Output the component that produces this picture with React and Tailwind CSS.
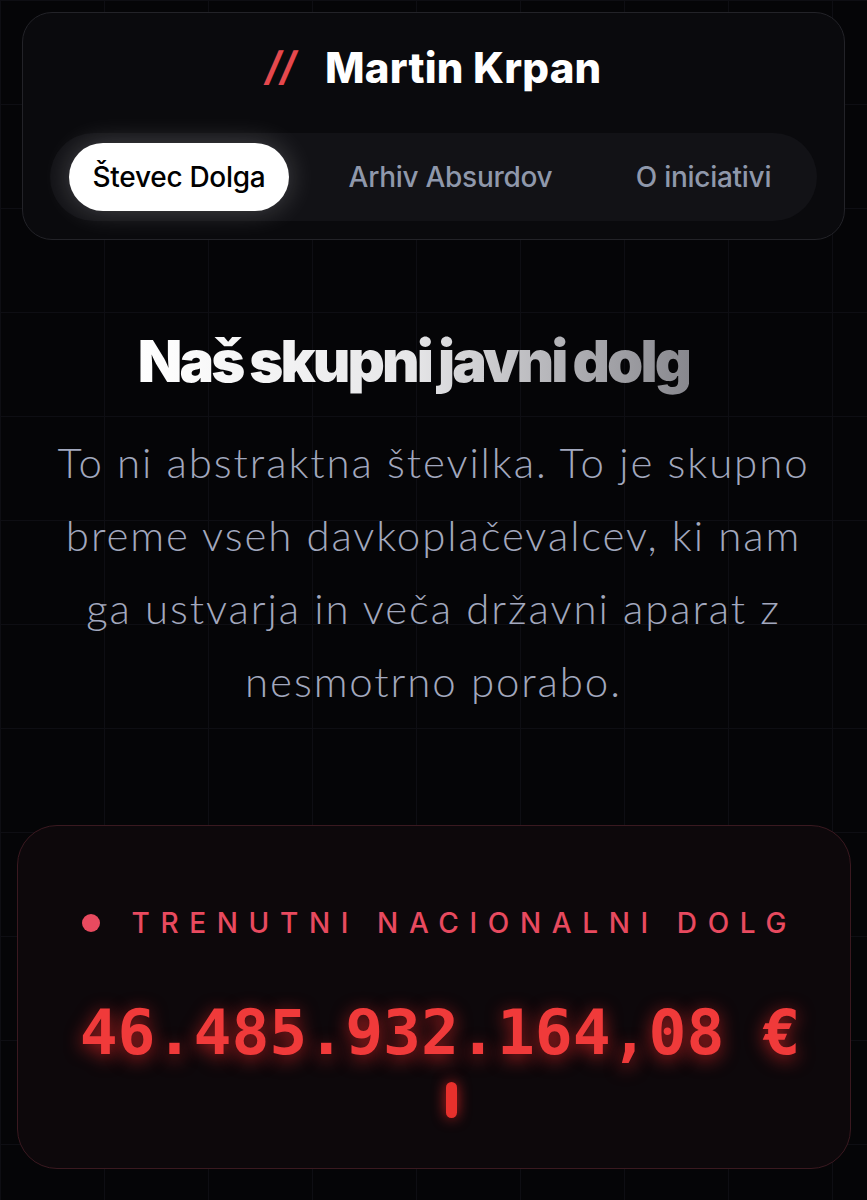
export default function App() {
  return (
    <div className="min-h-[1200px] w-full bg-[#050507] bg-[linear-gradient(to_right,#0e0e13_1px,transparent_1px),linear-gradient(to_bottom,#0e0e13_1px,transparent_1px)] bg-[size:104px_104px] pt-3 pb-8 font-['Inter',sans-serif] overflow-hidden">
      {/* header */}
      <header className="mx-[22px] rounded-[30px] border border-[#232328] bg-[#0a0a0d] px-[27px] pt-[30px] pb-[18px]">
        <div className="flex items-center justify-center gap-[30px] h-[48px]">
          <span className="text-[40px] font-bold italic text-[#e5484d] tracking-[-0.02em]">//</span>
          <span className="text-[42px] font-extrabold text-white tracking-[0.005em]">Martin Krpan</span>
        </div>
        <nav className="mt-[42px] flex items-center rounded-full bg-[#121216] py-[10px] pl-[19px]">
          <div className="h-[68px] w-[220px] flex items-center justify-center rounded-full bg-white text-[28px] font-medium text-black tracking-[-0.01em] shadow-[0_0_28px_rgba(255,255,255,0.22)]">
            Števec Dolga
          </div>
          <div className="ml-[57px] w-[209px] h-[68px] flex items-center justify-center text-[28px] font-medium text-[#8f98ab] tracking-[-0.01em] whitespace-nowrap">
            Arhiv Absurdov
          </div>
          <div className="ml-[77px] w-[143px] h-[68px] flex items-center justify-center text-[28px] font-medium text-[#8f98ab] tracking-[-0.01em] whitespace-nowrap">
            O iniciativi
          </div>
        </nav>
      </header>

      {/* intro */}
      <section className="mt-[86px] flex flex-col items-center px-[40px] text-center">
        <h1 className="mr-[40px] text-[58px] leading-[70px] font-black tracking-[-0.05em] [word-spacing:-0.03em] bg-gradient-to-r from-white via-[#e6e6e8] to-[#88888e] bg-clip-text text-transparent">
          Naš skupni javni dolg
        </h1>
        <p className="mt-[30px] font-['Lato',sans-serif] font-light text-[42px] leading-[73px] tracking-[0.045em] text-[#a2a8be]">
          To ni abstraktna številka. To je skupno breme vseh davkoplačevalcev, ki nam ga ustvarja in veča državni aparat z nesmotrno porabo.
        </p>
      </section>

      {/* counter */}
      <section className="mt-[107px] ml-[17px] mr-[16px] rounded-[40px] border border-[#3a1920] bg-[#0d080b] pt-[76px] pb-[50px] flex flex-col items-center">
        <div className="flex items-center gap-[32px]">
          <span className="h-[18px] w-[18px] rounded-full bg-[#e84a5f]"></span>
          <span className="text-[28px] font-medium uppercase tracking-[0.38em] -mr-[0.38em] text-[#e84a5f] whitespace-nowrap">
            Trenutni nacionalni dolg
          </span>
        </div>
        <div className="mt-[54px] pl-[12px] font-['DejaVu_Sans_Mono',monospace] text-[63px] font-bold leading-[70px] text-[#f03a3a] whitespace-nowrap [text-shadow:0_4px_18px_rgba(240,40,40,0.7)]">
          46.485.932.164,08 €
        </div>
        <span className="mt-[14px] ml-[34px] h-[36px] w-[11px] rounded-full bg-[#e8302c] shadow-[0_0_14px_rgba(240,40,40,0.8)]"></span>
      </section>
    </div>
  );
}
